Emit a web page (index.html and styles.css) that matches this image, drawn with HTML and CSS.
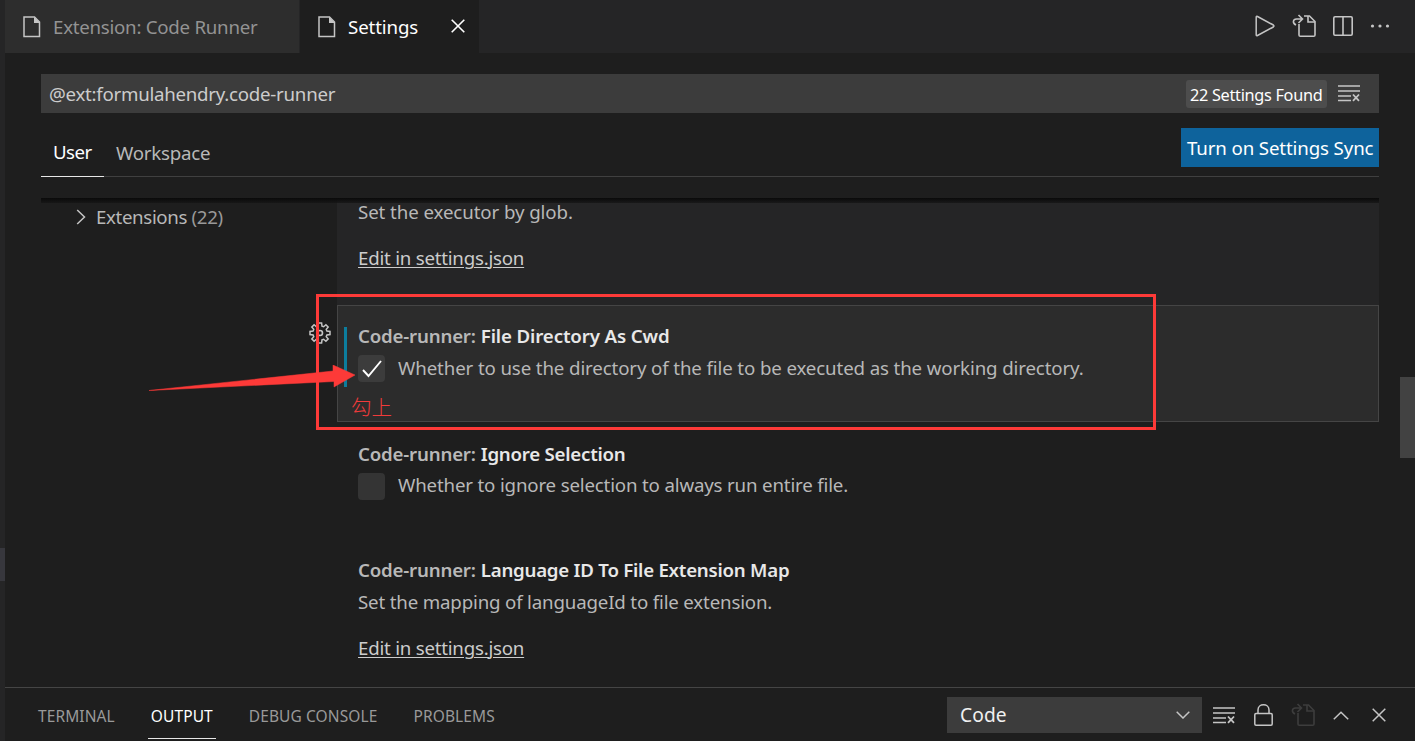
FILE: index.html
```html
<!DOCTYPE html>
<html lang="en">
<head>
<meta charset="utf-8">
<title>Settings</title>
<link rel="stylesheet" href="styles.css">
</head>
<body>
<div class="app">
  <aside class="sidebar-edge"><div class="sidebar-selection"></div></aside>
  <main class="workbench">
    <header class="tabs">
      <div class="tab tab-extension">
        <svg class="file-icon" width="18" height="22" viewBox="0 0 18 22"><path d="M1 1H11.500L16.500 6V20.500H1Z" fill="none" stroke="#c5c5c5" stroke-width="1.500"/><path d="M11 1L17 7H11Z" fill="#c5c5c5"/></svg>
        <span class="t-ext">Extension: Code Runner</span>
      </div>
      <div class="tab tab-active">
        <svg class="file-icon" width="18" height="22" viewBox="0 0 18 22"><path d="M1 1H11.500L16.500 6V20.500H1Z" fill="none" stroke="#c5c5c5" stroke-width="1.500"/><path d="M11 1L17 7H11Z" fill="#c5c5c5"/></svg>
        <span class="t-set">Settings</span>
        <svg class="tab-close" width="14" height="14" viewBox="0 0 14 14"><path d="M.7.7L13.300 13.300M13.300.7L.7 13.300" stroke="#fff" stroke-width="1.600"/></svg>
      </div>
      <div class="editor-actions">
        <svg width="20" height="22" viewBox="0 0 20 22"><path d="M1.200 2.200Q1.200.8 2.500 1.500L18.300 10Q19.600 11 18.300 12L2.500 20.500Q1.200 21.200 1.200 19.800Z" fill="none" stroke="#c5c5c5" stroke-width="1.500"/></svg>
        <svg width="24" height="24" viewBox="0 0 24 24"><g fill="none" stroke="#c5c5c5" stroke-width="1.600"><path d="M12 2H17.500L23 7.500V21Q23 22.300 21.700 22.300H8.300Q7 22.300 7 21V10"/><path d="M16 2V8H23"/><path d="M4 11C0 9 1 5 4.500 5H10M6.500 1L10.500 5L6.500 9"/></g></svg>
        <svg width="20" height="20" viewBox="0 0 20 20"><path d="M2 .8H18Q19.200.8 19.200 2V18Q19.200 19.200 18 19.200H2Q.8 19.200.8 18V2Q.8.8 2 .8ZM10 1V19" fill="none" stroke="#c5c5c5" stroke-width="1.600"/></svg>
        <svg width="20" height="4" viewBox="0 0 20 4"><g fill="#c5c5c5"><circle cx="2.500" cy="2" r="1.600"/><circle cx="10" cy="2" r="1.600"/><circle cx="17.500" cy="2" r="1.600"/></g></svg>
      </div>
    </header>

    <section class="settings-editor">
      <div class="search">
        <span class="t-query">@ext:formulahendry.code-runner</span>
        <span class="count"><span class="t-count">22 Settings Found</span></span>
        <svg class="clear-icon" width="23" height="17" viewBox="0 0 23 17"><path d="M0 1H22M0 6H22M0 11H13M0 15.500H13" stroke="#c5c5c5" stroke-width="1.500"/><path d="M15 9.500L21 15.800M21 9.500L15 15.800" stroke="#c5c5c5" stroke-width="1.800"/></svg>
      </div>
      <div class="scope">
        <div class="scope-tab scope-active"><span class="t-user">User</span></div>
        <div class="scope-tab"><span class="t-work">Workspace</span></div>
        <button class="sync"><span class="t-sync">Turn on Settings Sync</span></button>
      </div>
      <div class="settings-body">
        <div class="scroll-shadow"></div>
        <nav class="toc">
          <svg width="10" height="16" viewBox="0 0 10 16"><path d="M1.200 1L8.500 8L1.200 15" fill="none" stroke="#c5c5c5" stroke-width="1.500"/></svg>
          <span class="t-toc">Extensions <i>(22)</i></span>
        </nav>
        <div class="settings-list">
          <article class="item item-glob">
            <p class="t-glob">Set the executor by glob.</p>
            <a class="edit-link">Edit in settings.json</a>
          </article>
          <article class="item item-focused">
            <div class="modified-bar"></div>
            <svg class="gear" width="22" height="22" viewBox="-11 -11 22 22"><path d="M-1.600-10H1.600L2-6.900L3.650-6.250L5.900-8.200L8.200-5.900L6.250-3.650L6.900-2L10-1.600V1.600L6.900 2L6.250 3.650L8.200 5.900L5.900 8.200L3.650 6.250L2 6.900L1.600 10H-1.600L-2 6.900L-3.650 6.250L-5.900 8.200L-8.200 5.900L-6.250 3.650L-6.900 2L-10 1.600V-1.600L-6.900-2L-6.250-3.650L-8.200-5.900L-5.900-8.200L-3.650-6.250L-2-6.900Z" fill="none" stroke="#c5c5c5" stroke-width="1.500"/><circle r="2.500" fill="none" stroke="#c5c5c5" stroke-width="1.600"/></svg>
            <h3><span class="cat">Code-runner:</span><span class="t-cwd">File Directory As Cwd</span></h3>
            <div class="check-row">
              <span class="checkbox"><svg width="20" height="18" viewBox="0 0 20 18"><path d="M1 10L6.500 16L19 1" fill="none" stroke="#fff" stroke-width="1.900"/></svg></span>
              <span class="t-whether">Whether to use the directory of the file to be executed as the working directory.</span>
            </div>
          </article>
          <article class="item item-ignore">
            <h3><span class="cat">Code-runner:</span><span class="t-ign">Ignore Selection</span></h3>
            <div class="check-row"><span class="checkbox"></span><span class="t-ignore">Whether to ignore selection to always run entire file.</span></div>
          </article>
          <article class="item item-language">
            <h3><span class="cat">Code-runner:</span><span class="t-lang">Language ID To File Extension Map</span></h3>
            <p class="t-map">Set the mapping of languageId to file extension.</p>
            <a class="edit-link">Edit in settings.json</a>
          </article>
        </div>
      </div>
      <div class="scrollbar"></div>
    </section>

    <footer class="panel">
      <div class="panel-tab"><span class="t-term">TERMINAL</span></div>
      <div class="panel-tab panel-active"><span class="t-out">OUTPUT</span></div>
      <div class="panel-tab"><span class="t-debug">DEBUG CONSOLE</span></div>
      <div class="panel-tab"><span class="t-prob">PROBLEMS</span></div>
      <div class="select"><span class="t-code">Code</span><svg width="14" height="8" viewBox="0 0 14 8"><path d="M.7.8L7 7L13.300.8" fill="none" stroke="#c5c5c5" stroke-width="1.500"/></svg></div>
      <div class="panel-actions">
        <svg width="23" height="17" viewBox="0 0 23 17"><path d="M0 1H22M0 6H22M0 11H13M0 15.500H13" stroke="#c5c5c5" stroke-width="1.500"/><path d="M15 9.500L21 15.800M21 9.500L15 15.800" stroke="#c5c5c5" stroke-width="1.800"/></svg>
        <svg width="19" height="22" viewBox="0 0 19 22"><path d="M2 9.500H17Q18.200 9.500 18.200 10.700V20Q18.200 21.200 17 21.200H2Q.8 21.200.8 20V10.700Q.8 9.500 2 9.500ZM4 9.500V6C4-.9 15-.9 15 6V9.500" fill="none" stroke="#c5c5c5" stroke-width="1.500"/></svg>
        <svg class="disabled" width="24" height="24" viewBox="0 0 24 24"><g fill="none" stroke="#3d3d3d" stroke-width="1.600"><path d="M12 2H17.500L23 7.500V21Q23 22.300 21.700 22.300H8.300Q7 22.300 7 21V10"/><path d="M16 2V8H23"/><path d="M4 11C0 9 1 5 4.500 5H10M6.500 1L10.500 5L6.500 9"/></g></svg>
        <svg class="collapse" width="16" height="9" viewBox="0 0 16 9"><path d="M.8 8.200L8 1.200L15.200 8.200" fill="none" stroke="#c5c5c5" stroke-width="1.500"/></svg>
        <svg width="14" height="14" viewBox="0 0 14 14"><path d="M.7.7L13.300 13.300M13.300.7L.7 13.300" stroke="#c5c5c5" stroke-width="1.500"/></svg>
      </div>
    </footer>
  </main>
  <div class="callout"></div>
  <svg class="arrow" width="210" height="26" viewBox="0 0 210 26"><path d="M1 25.500L185 6V0L207 10L186 22V16.500L1 25.500Z" fill="#fd3a38" stroke="#fd3a38" stroke-width=".5"/></svg>
  <span class="note">勾上</span>
</div>
</body>
</html>
```
FILE: styles.css
```css
* { box-sizing: border-box; }
body { margin: 0; overflow: hidden; background: #1e1e1e; color: #b8b8b8; font: 18.7px/26px "Noto Sans", "Open Sans", sans-serif; }
svg { display: block; flex: none; }
p, h3 { margin: 0; }
span, p, a { white-space: nowrap; }
.app { position: relative; display: flex; width: 1415px; height: 741px; overflow: hidden; }
.sidebar-edge { width: 5px; padding-top: 548px; background: #252526; }
.sidebar-selection { height: 33px; background: #37373d; }
.workbench { width: 1410px; display: flex; flex-direction: column; }

.tabs { display: flex; height: 53px; background: #252526; }
.tab { display: flex; align-items: center; padding-left: 18px; height: 53px; }
.tab span { margin-left: 12px; }
.tab-extension { width: 294px; margin-right: 1px; background: #2d2d2d; color: #939393; }
.tab-active { width: 179px; background: #1e1e1e; color: #fff; }
.tab-close { margin-left: auto; margin-right: 14px; margin-bottom: 1px; }
.editor-actions { display: flex; align-items: center; margin-left: auto; padding: 0 25px 2px 0; gap: 17px; }

.settings-editor { position: relative; height: 634px; padding: 21px 36px 0; overflow: hidden; }
.search { display: flex; align-items: center; height: 39px; padding-left: 8px; background: #3c3c3c; color: #ccc; }
.count { display: flex; align-items: center; width: 141px; height: 28px; margin-left: auto; padding: 2px 0 0 4px; border-radius: 3px; background: #4d4d4d; color: #fff; font-size: 16.3px; }
.clear-icon { margin: 0 18px 0 11px; }
.scope { display: flex; height: 49px; margin-top: 15px; border-bottom: 1px solid #404040; }
.scope-tab { height: 49px; padding: 12px; }
.scope-active { width: 63px; padding-top: 11px; border-bottom: 1px solid #e7e7e7; color: #fff; }
.sync { width: 198px; height: 39px; margin-left: auto; padding: 0 0 0 6px; border: 0; background: #0e639c; color: #fff; font: inherit; text-align: left; }
.settings-body { position: relative; display: flex; margin-top: 21px; height: 490px; }
.scroll-shadow { position: absolute; z-index: 2; inset: 0 0 auto; height: 5px; background: linear-gradient(#0a0a0a, rgba(20, 20, 20, .7)); }
.toc { display: flex; align-items: center; width: 296px; height: 38px; padding-left: 35px; gap: 10px; }
.toc i { font-style: normal; color: #999; }
.settings-list { width: 1042px; }
.item { position: relative; height: 117px; padding: 18px 20px 0 21px; }
.item-glob { height: 107px; padding-top: 1px; background: #252526; }
.item-focused { padding-top: 17px; padding-left: 20px; border: 1px solid #454545; background: #2c2c2c; }
.item-ignore { padding-top: 19px; }
.item-language { height: 148px; }
.item h3 { display: flex; height: 28px; gap: 5px; font: inherit; font-weight: 600; color: #e8e8e8; }
.cat { color: #b8b8b8; }
.item p { height: 26px; margin-top: 4px; }
.item-glob p { margin-top: 0; }
.edit-link { display: inline-block; margin-top: 20px; color: #ccc; text-decoration: underline; text-underline-offset: 2px; text-decoration-thickness: 1px; }
.check-row { display: flex; align-items: center; gap: 13px; height: 27px; margin-top: 4px; }
.check-row > span:last-child { margin-bottom: 2px; }
.item-ignore .check-row > span:last-child { margin-bottom: 4px; }
.checkbox { display: flex; align-items: center; justify-content: center; width: 27px; height: 27px; border-radius: 4px; background: #3c3c3c; }
.item-ignore .checkbox { background: #343434; }
.modified-bar { position: absolute; left: 6px; top: 21px; width: 3px; height: 60px; background: #0c7d9d; }
.gear { position: absolute; left: -29px; top: 16px; }
.scrollbar { position: absolute; right: 0; top: 324px; width: 15px; height: 81px; background: #424242; }

.panel { display: flex; height: 54px; border-top: 1px solid #454545; padding-left: 30px; color: #999; font-size: 15.5px; letter-spacing: .1px; }
.panel-tab { height: 51px; padding: 15px 3px 0; margin-right: 30px; }
.panel-active { color: #fff; border-bottom: 1px solid #e7e7e7; }
.select { display: flex; align-items: center; justify-content: space-between; width: 255px; height: 36px; margin: 9px 11px 0 auto; padding: 0 12px 0 13px; background: #3c3c3c; color: #f0f0f0; font-size: 19.2px; }
.panel-actions { display: flex; align-items: center; width: 202px; height: 55px; padding-bottom: 1px; gap: 18px; }
.collapse { margin-right: 5px; }

.t-ext, .t-query { letter-spacing: -.26px; }
.t-set, .t-sync, .t-cwd { letter-spacing: -.13px; }
.t-count { letter-spacing: -.3px; }
.t-user { letter-spacing: -.55px; }
.t-work { letter-spacing: -.25px; }
.t-toc { letter-spacing: -.36px; }
.t-glob { letter-spacing: -.09px; }
.edit-link { letter-spacing: -.23px; }
.t-whether { letter-spacing: -.125px; }
.t-ignore, .t-map { letter-spacing: -.17px; }
.cat { letter-spacing: -.2px; }
.t-ign, .t-lang { letter-spacing: -.25px; }

.callout { position: absolute; left: 316px; top: 294px; width: 840px; height: 136px; border: 3px solid #fd3a38; }
.arrow { position: absolute; left: 148px; top: 365px; }
.note { position: absolute; left: 351px; top: 393px; color: #f03b3b; font: 300 20.500px/26px "Noto Sans CJK SC", sans-serif; }
```
